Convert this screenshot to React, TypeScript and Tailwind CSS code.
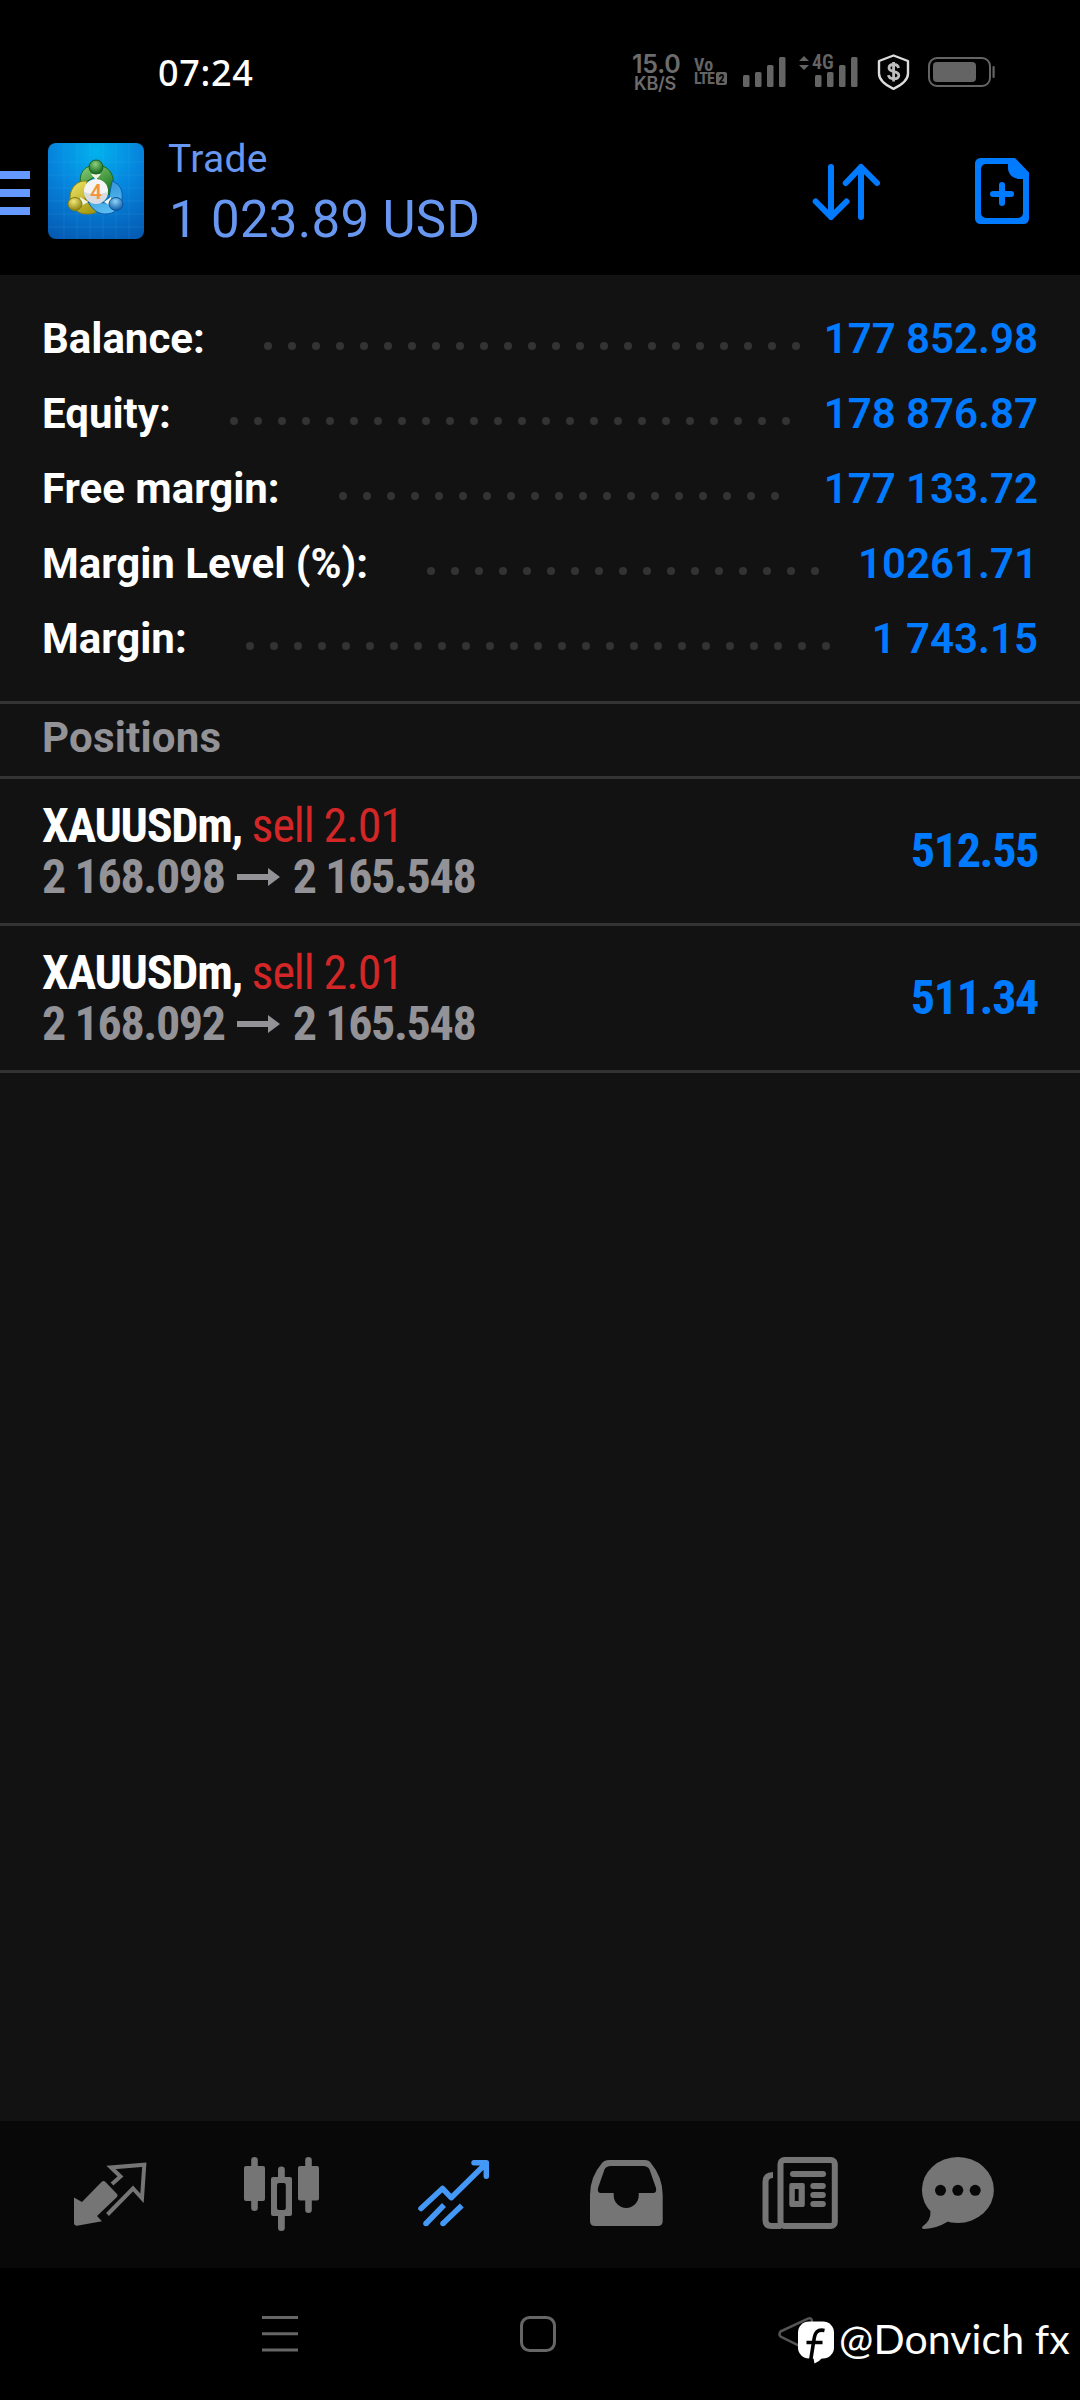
interface SummaryItem {
  label: string;
  value: string;
  dots: number;
}

interface Position {
  id: number;
  symbol: string;
  side: string;
  open: string;
  current: string;
  profit: string;
}

const summary: SummaryItem[] = [
  { label: "Balance:", value: "177 852.98", dots: 23 },
  { label: "Equity:", value: "178 876.87", dots: 24 },
  { label: "Free margin:", value: "177 133.72", dots: 19 },
  { label: "Margin Level (%):", value: "10261.71", dots: 17 },
  { label: "Margin:", value: "1 743.15", dots: 25 },
];

const positions: Position[] = [
  {
    id: 1,
    symbol: "XAUUSDm,",
    side: "sell 2.01",
    open: "2 168.098",
    current: "2 165.548",
    profit: "512.55",
  },
  {
    id: 2,
    symbol: "XAUUSDm,",
    side: "sell 2.01",
    open: "2 168.092",
    current: "2 165.548",
    profit: "511.34",
  },
];

const SignalBars = () => (
  <svg width="44" height="31" viewBox="0 0 44 31" fill="#646464">
    <rect x="0" y="18" width="6.5" height="12" rx="1.5" />
    <rect x="12" y="15" width="6.5" height="15" rx="1.5" />
    <rect x="24" y="8" width="6.5" height="22" rx="1.5" />
    <rect x="36" y="0" width="6.5" height="30" rx="1.5" />
  </svg>
);

const StatusBar = () => (
  <div className="flex h-[120px] shrink-0 items-start pl-[158px]">
    <div className="mt-[48px] w-[474px] font-['Noto_Sans',sans-serif] text-[36px] leading-[50px] font-medium tracking-[0.7px] text-white">
      07:24
    </div>
    <div className="mt-[51px] w-[46px] text-center font-['Inter',sans-serif] font-semibold text-[#6c6c6c]">
      <div className="text-[25px] leading-[26px] tracking-[-0.2px]">15.0</div>
      <div className="text-[18px] leading-[14px] tracking-[-0.3px]">KB/S</div>
    </div>
    <div className="mt-[57px] ml-[16px] w-[35px] font-['Roboto',sans-serif] font-bold text-[#646464] font-stretch-condensed">
      <div className="text-[18px] leading-[15px] tracking-[0.3px]">Vo</div>
      <div className="flex items-center gap-[2px]">
        <span className="w-[20px] text-[16px] leading-[13px] tracking-[-0.8px]">
          LTE
        </span>
        <span className="h-[13px] w-[11px] rounded-[2px] bg-[#646464] text-center text-[12px] leading-[14px] text-black">
          2
        </span>
      </div>
    </div>
    <div className="mt-[57px] ml-[14px]">
      <SignalBars />
    </div>
    <div className="relative mt-[57px] ml-[28px]">
      <SignalBars />
      <svg
        className="absolute top-[-2px] left-[-17px]"
        width="12"
        height="16"
        viewBox="0 0 12 16"
        fill="#646464"
      >
        <path d="M1 6 6 1l5 5zM1 10h10l-5 5z" />
      </svg>
      <span className="absolute top-[-4px] left-[-3px] bg-black pr-px font-['Roboto',sans-serif] text-[20px] leading-[18px] font-semibold text-[#646464] font-stretch-semi-condensed">
        4G
      </span>
    </div>
    <svg
      className="mt-[53px] ml-[17px]"
      width="36"
      height="38"
      viewBox="0 0 36 38"
      fill="none"
      stroke="#dcdcdc"
      strokeWidth="2.4"
    >
      <path d="M17.500 2.500 32 8v12.500c0 6.500-6.300 11.500-14.500 15.300C9.300 32 3 27 3 20.500V8z" strokeLinejoin="round" />
      <path
        d="M22.500 15c-.3-2.200-2-3.500-4.800-3.500-3 0-4.700 1.300-4.700 3.500 0 4.800 9.800 2.300 9.800 7.200 0 2.300-2 3.600-5 3.600-3.200 0-5-1.300-5.300-3.700M17.600 9v19.500"
        stroke="#bdbdbd"
        strokeWidth="2.800"
      />
    </svg>
    <svg
      className="mt-[56px] ml-[16px]"
      width="68"
      height="32"
      viewBox="0 0 68 32"
    >
      <rect x="1" y="2" width="61" height="28" rx="8" fill="none" stroke="#646464" strokeWidth="2" />
      <rect x="5" y="6" width="43" height="20" rx="4" fill="#646464" />
      <rect x="64.500" y="10" width="2.200" height="12" rx="1" fill="#646464" />
    </svg>
  </div>
);

const Logo = () => (
  <svg className="ml-[18px]" width="96" height="96" viewBox="0 0 96 96">
    <defs>
      <radialGradient id="sky" cx="0.5" cy="0.08" r="1">
        <stop offset="0" stopColor="#02b2ee" />
        <stop offset="0.45" stopColor="#0686de" />
        <stop offset="1" stopColor="#055ab2" />
      </radialGradient>
      <linearGradient id="green" x1="0" y1="0" x2="0.6" y2="1">
        <stop offset="0" stopColor="#8fd07c" />
        <stop offset="1" stopColor="#1e7a22" />
      </linearGradient>
      <linearGradient id="yellow" x1="0" y1="0" x2="0.6" y2="1">
        <stop offset="0" stopColor="#f3e768" />
        <stop offset="1" stopColor="#a59a12" />
      </linearGradient>
      <linearGradient id="blue" x1="0.3" y1="0" x2="0.6" y2="1">
        <stop offset="0" stopColor="#2f8fd6" />
        <stop offset="1" stopColor="#5cc0f4" />
      </linearGradient>
      <radialGradient id="greenBall" cx="0.45" cy="0.3" r="0.7">
        <stop offset="0" stopColor="#8ccf7c" />
        <stop offset="1" stopColor="#14651b" />
      </radialGradient>
      <radialGradient id="yellowBall" cx="0.4" cy="0.3" r="0.7">
        <stop offset="0" stopColor="#f2e679" />
        <stop offset="1" stopColor="#8f8410" />
      </radialGradient>
      <radialGradient id="blueBall" cx="0.45" cy="0.3" r="0.7">
        <stop offset="0" stopColor="#8fd4f8" />
        <stop offset="1" stopColor="#0d58a6" />
      </radialGradient>
    </defs>
    <rect width="96" height="96" rx="8" fill="url(#sky)" />
    <path
      d="M16 0v96M29 0v96M42 0v96M55 0v96M68 0v96M81 0v96M0 19h96M0 32h96M0 45h96M0 58h96M0 71h96M0 84h96"
      stroke="#5cc4ff"
      strokeOpacity="0.12"
    />
    <path d="M33 42c-3-12 4-20 15-20 12 0 19 9 17 21-1 5-3 8-6 9L48 33z" fill="url(#green)" stroke="#176a1c" />
    <path d="M39 38c-9-1-17 6-17 17 0 10 8 16 17 16 6 0 11-2 13-5L37 56z" fill="url(#yellow)" stroke="#8a8110" />
    <path d="M64 38c8 3 11 9 10 18-1 10-8 15-17 15-7 0-13-5-17-12l20 1z" fill="url(#blue)" stroke="#0b5ca8" />
    <path d="M43 31h10l-5 6zM32 54l8 5-7 4zM56 59l7-5v9z" fill="#eef3e0" />
    <circle cx="48" cy="24" r="7" fill="url(#greenBall)" stroke="#14601a" />
    <ellipse cx="27" cy="61" rx="7" ry="6.500" fill="url(#yellowBall)" stroke="#857b0e" />
    <ellipse cx="68" cy="61" rx="7" ry="6.500" fill="url(#blueBall)" stroke="#0c559f" />
    <circle cx="48" cy="48" r="12" fill="#f4f4f6" />
    <path d="M36 49a12 12 0 0 0 24 0l-12 3z" fill="#d9dbe0" />
    <text
      x="48"
      y="55.500"
      textAnchor="middle"
      fontFamily="Roboto, sans-serif"
      fontSize="21"
      fontWeight="600"
      fill="#f2953c"
    >
      4
    </text>
  </svg>
);

const Header = () => (
  <header className="flex h-[155px] shrink-0 items-start">
    <div className="mt-[51px] flex w-[30px] flex-col gap-[10px]">
      <div className="h-2 bg-[#6699ff]" />
      <div className="h-2 bg-[#6699ff]" />
      <div className="h-2 bg-[#6699ff]" />
    </div>
    <div className="mt-[23px]">
      <Logo />
    </div>
    <div className="ml-6 w-[640px] text-[#6797f0]">
      <div className="mt-[15px] text-[39px] leading-[48px] tracking-[0.3px]">
        Trade
      </div>
      <div className="mt-[7px] pl-px text-[51px] leading-[60px] tracking-[0.3px]">
        1 023.89 USD
      </div>
    </div>
    <svg
      className="mt-[38px]"
      width="74"
      height="66"
      viewBox="0 0 74 66"
      fill="none"
      stroke="#007aff"
      strokeWidth="6"
      strokeLinecap="round"
      strokeLinejoin="round"
    >
      <path d="M23 9v50M7.700 43.500 23 59l15.500-15.500M53 59V9M37.800 25 53 9l16 16" />
    </svg>
    <svg
      className="ml-[92px]"
      width="56"
      height="155"
      viewBox="0 0 56 155"
      fill="none"
    >
      <path
        d="M5.500 38H41L55 52.500V98.500a5.500 5.500 0 0 1-5.500 5.500H6.500A5.500 5.500 0 0 1 1 98.500V43.500A5.500 5.500 0 0 1 6.500 38zM34 44H12a5 5 0 0 0-5 5V93a5 5 0 0 0 5 5H44a5 5 0 0 0 5-5V59H46C39 59 34 54 34 48z"
        fill="#007aff"
        fillRule="evenodd"
      />
      <path d="M28 65v18M19 74h18" stroke="#007aff" strokeWidth="6" strokeLinecap="round" />
    </svg>
  </header>
);

const SummaryRow = ({ label, value, dots }: SummaryItem) => (
  <div className="flex h-[75px] items-center text-[42px] font-bold">
    <div className="text-white">{label}</div>
    <div className="mt-[14px] ml-[59px] flex gap-4">
      {Array.from({ length: dots }, (_, i) => (
        <div key={i} className="size-2 rounded-full bg-[#333333]" />
      ))}
    </div>
    <div className="ml-auto font-semibold text-[#007aff]">{value}</div>
  </div>
);

const PositionRow = ({ symbol, side, open, current, profit }: Position) => (
  <div className="flex h-[147px] items-start justify-between border-b-[3px] border-[#333333] px-[42px] pt-[21px] text-[48px] leading-[51px] font-bold tracking-[-1.35px] font-stretch-condensed">
    <div>
      <div className="text-white">
        <span className="tracking-[-1.3px]">{symbol}</span>{" "}
        <span className="font-normal tracking-[-1.1px] text-[#d32626]">
          {side}
        </span>
      </div>
      <div className="flex items-center text-[#929297]">
        <span>{open}</span>
        <svg className="mr-[13px] ml-3" width="43" height="18" viewBox="0 0 43 18">
          <path d="M0 6h31V0l12 9-12 9v-6H0z" fill="#929297" />
        </svg>
        <span>{current}</span>
      </div>
    </div>
    <div className="mt-[25px] text-[#007aff]">{profit}</div>
  </div>
);

const TabBar = () => (
  <nav className="h-[147px] shrink-0 bg-[#080808]">
    <div className="flex h-full items-start pt-9 pl-[72px]">
      <svg width="76" height="76" viewBox="72 2157 76 76">
        <path
          d="M74 2197.500 82 2202l20-20.500q1.500-1 3 0l12 12.500q1.200 1.500 0 3L97 2216l5 5.300-25 4.500q-3 0-3-3z"
          fill="#757575"
        />
        <path
          d="m112 2184 8.500-7.500-9.500-9 33.300-2.700-2.300 33.500-9-9.800-25.500 26"
          fill="none"
          stroke="#757575"
          strokeWidth="4"
        />
      </svg>
      <svg className="ml-[95px]" width="77" height="76" viewBox="243 2157 77 76">
        <g fill="#757575">
          <rect x="251.200" y="2157" width="6.600" height="54" rx="3.300" />
          <rect x="244" y="2166" width="21" height="35" rx="2" />
          <rect x="305.200" y="2157" width="6.600" height="56" rx="3.300" />
          <rect x="298" y="2166" width="21" height="34.500" rx="2" />
          <rect x="278" y="2166.500" width="6.800" height="64.500" rx="3.300" />
          <rect x="271" y="2177" width="21" height="39" rx="2" />
        </g>
        <rect x="277" y="2183" width="8.800" height="27" rx="2" fill="#080808" />
      </svg>
      <svg
        className="ml-[97px]"
        width="76"
        height="76"
        viewBox="417 2157 76 76"
        fill="none"
        stroke="#4499f8"
        strokeWidth="5.500"
      >
        <path
          d="m421 2208.500 21.500-20 8.700 9.200 35-34.500M474 2162.800h12.300v13.500"
          strokeLinecap="round"
          strokeLinejoin="round"
        />
        <path d="m444 2205-18 18.500M461.800 2205.500l-18.800 18" />
        <g fill="#4499f8" stroke="none">
          <circle cx="426" cy="2223.500" r="2.800" />
          <circle cx="443" cy="2223.500" r="2.800" />
        </g>
      </svg>
      <svg className="ml-[95px]" width="76" height="76" viewBox="588 2157 76 76">
        <path
          d="M609 2160H645q4 0 5.500 2.500Q662.700 2177 662.700 2195V2221q0 5-5 5H595q-5 0-5-5V2195Q590 2177 602 2163q2.500-3 7-3zM611 2166q-5 0-6.500 3.500L598 2188q-1 5 3 5h12.700v2.500a12.500 12.500 0 0 0 25 0V2193H653q4 0 3-5L649.500 2169.500Q648 2166 643 2166z"
          fill="#757575"
          fillRule="evenodd"
        />
      </svg>
      <svg className="ml-[97px]" width="78" height="76" viewBox="761 2157 78 76">
        <g fill="none" stroke="#757575" strokeWidth="6">
          <rect x="780.500" y="2160" width="54.300" height="66" rx="4" />
          <path d="M773 2175q-7.500 0-7.500 7V2220q0 6 6 6H781" />
        </g>
        <g fill="#757575">
          <rect x="790" y="2171" width="36" height="6" rx="3" />
          <rect x="810.300" y="2183" width="15.500" height="6" rx="3" />
          <rect x="810.300" y="2192" width="15.500" height="6" rx="3" />
          <rect x="810.300" y="2201" width="15.500" height="6" rx="3" />
          <path d="M791.300 2183h11.500q2 0 2 2v20q0 2-2 2h-11.500q-2 0-2-2v-20q0-2 2-2zm3.500 6v12h3.800v-12z" />
        </g>
      </svg>
      <svg className="ml-[81px]" width="76" height="76" viewBox="920 2157 76 76">
        <ellipse cx="957.900" cy="2190" rx="36" ry="33" fill="#757575" />
        <path d="M930.500 2211q.5 10-8 15.500-1.500 2.500 2 2.500 12-.5 23.500-7.500l-5-12z" fill="#757575" />
        <g fill="#080808">
          <circle cx="940.500" cy="2190.300" r="5.500" />
          <circle cx="957.800" cy="2190.300" r="5.500" />
          <circle cx="975.200" cy="2190.300" r="5.500" />
        </g>
      </svg>
    </div>
  </nav>
);

const SystemNav = () => (
  <div className="flex h-[132px] shrink-0 items-start">
    <svg
      className="mt-[47px] ml-[261px] shrink-0"
      width="38"
      height="38"
      fill="none"
      stroke="#666666"
      strokeWidth="3"
    >
      <path d="M1 2.500h36M1 18.800h36M1 35h36" />
    </svg>
    <svg
      className="mt-[47px] ml-[220px] shrink-0"
      width="38"
      height="38"
      fill="none"
      stroke="#666666"
      strokeWidth="3"
    >
      <rect x="2.500" y="2.500" width="33" height="33" rx="8" />
    </svg>
    <svg
      className="mt-[47px] ml-[220px] shrink-0"
      width="60"
      height="54"
      viewBox="777 2315 60 54"
    >
      <path
        d="m780.500 2331.500 27.500-12.800q4-1.500 4 3v26q0 4-4 2.500l-27.500-13.700q-2-2.500 0-5z"
        fill="none"
        stroke="#555555"
        strokeWidth="2.500"
      />
      <rect x="798" y="2321.500" width="36" height="37" rx="11" fill="#fff" />
      <path d="M813 2356 814.500 2363.500Q820 2361 823 2357z" fill="#fff" />
      <path
        d="M824.500 2330.500c-7-1.500-9.500 2-10.500 9l-3.200 20M806.500 2342.500h16"
        fill="none"
        stroke="#000"
        strokeWidth="3.600"
      />
    </svg>
    <div className="mt-[41px] ml-[2px] font-['Lato',sans-serif] text-[41px] leading-[60px] tracking-[0.1px] whitespace-nowrap text-white">
      @Donvich fx
    </div>
  </div>
);

export default function App() {
  return (
    <div className="flex h-[2400px] w-[1080px] flex-col overflow-hidden bg-black font-['Roboto',sans-serif]">
      <StatusBar />
      <Header />
      <main className="flex-1 bg-[#121212]">
        <div className="px-[42px] pt-[26px] pb-[25px]">
          {summary.map((item) => (
            <SummaryRow key={item.label} {...item} />
          ))}
        </div>
        <div className="h-[78px] border-y-[3px] border-[#333333] px-[42px] text-[42px] leading-[67px] font-bold tracking-[0.2px] text-[#929297]">
          Positions
        </div>
        {positions.map((position) => (
          <PositionRow key={position.id} {...position} />
        ))}
      </main>
      <TabBar />
      <SystemNav />
    </div>
  );
}
